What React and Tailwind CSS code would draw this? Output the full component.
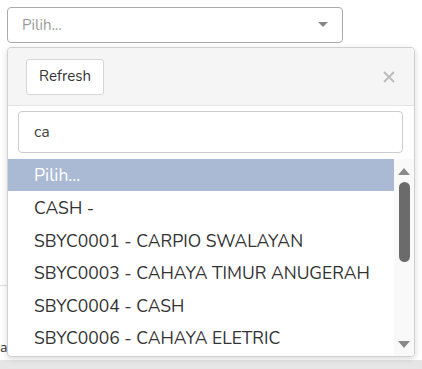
import React from "react";

const items = [
  "CASH -",
  "SBYC0001 - CARPIO SWALAYAN",
  "SBYC0003 - CAHAYA TIMUR ANUGERAH",
  "SBYC0004 - CASH",
  "SBYC0006 - CAHAYA ELETRIC",
];

export default function App() {
  return (
    <div className="relative w-[422px] h-[369px] bg-white overflow-hidden font-['Nunito','Noto_Sans',sans-serif] text-[#333]">
      {/* background page */}
      <div className="pt-[7px] pl-[7px]">
        <div className="w-[336px] h-[36px] border border-[#aaa] rounded-[4px] flex items-center justify-between pl-[14px] pr-[14px]">
          <span className="text-[15px] text-[#999]">Pilih...</span>
          <svg width="10" height="6" viewBox="0 0 10 6">
            <path d="M0 0 L10 0 L5 5 Z" fill="#888" />
          </svg>
        </div>
      </div>
      <div className="absolute left-0 top-[285px] w-[8px] border-t border-[#ddd]" />
      <div className="absolute left-0 top-[338px] text-[14px] leading-[20px]">a</div>
      <div className="absolute left-0 bottom-0 w-full h-[9px] bg-[#e6e6e6]" />

      {/* dropdown panel */}
      <div className="absolute left-[7px] top-[47px] w-[408px] h-[310px] bg-white border border-[#d0d0d0] rounded-[4px] shadow-[0_2px_6px_rgba(0,0,0,0.15)] overflow-hidden flex flex-col">
        <div className="h-[58px] bg-[#f5f5f5] border-b border-[#e3e3e3] flex items-center justify-between pl-[18px] pr-[19px] shrink-0">
          <button className="h-[36px] w-[78px] bg-white border border-[#d6d6d6] rounded-[3px] text-[15px] text-[#333]">
            Refresh
          </button>
          <svg width="12" height="12" viewBox="0 0 12 12">
            <path d="M1 1 L11 11 M11 1 L1 11" stroke="#bbb" strokeWidth="1.8" />
          </svg>
        </div>
        <div className="pt-[5px] pb-[6px] pl-[10px] pr-[11px] shrink-0">
          <div className="h-[42px] border border-[#ccc] rounded-[4px] flex items-center pl-[15px] text-[16px] text-[#444]">
            ca
          </div>
        </div>
        <div className="flex flex-1 min-h-0">
          <div className="flex-1">
            <div className="h-[32px] bg-[#aab9d4] text-white flex items-center pl-[26px] text-[17.5px]">
              Pilih...
            </div>
            {items.map((t) => (
              <div key={t} className="h-[32.5px] flex items-center pl-[26px] pt-[2px] text-[17.5px] text-[#333]">
                {t}
              </div>
            ))}
          </div>
          <div className="w-[20px] bg-[#f9f9f9] flex flex-col items-center pt-[8px]">
            <svg width="12" height="8" viewBox="0 0 12 8">
              <path d="M0 8 L6 1 L12 8 Z" fill="#8a8a8a" />
            </svg>
            <div className="mt-[7px] w-[11px] h-[80px] rounded-full bg-[#6b6b6b]" />
            <div className="flex-1" />
            <svg width="12" height="8" viewBox="0 0 12 8" className="mb-[7px]">
              <path d="M0 0 L6 7 L12 0 Z" fill="#8a8a8a" />
            </svg>
          </div>
        </div>
      </div>
    </div>
  );
}
